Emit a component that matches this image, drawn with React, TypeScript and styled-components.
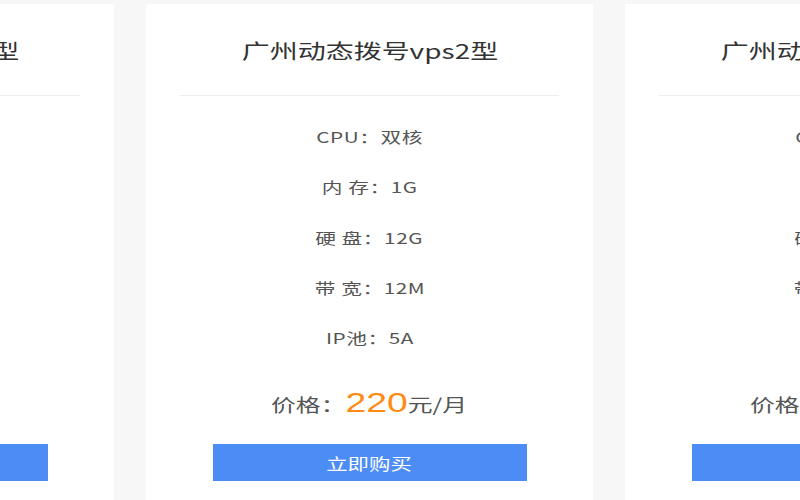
import React from 'react';
import styled, { createGlobalStyle } from 'styled-components';

const GlobalStyle = createGlobalStyle`
  html, body {
    margin: 0;
    padding: 0;
    background: #f7f7f7;
  }
  body {
    font-family: "Noto Sans CJK SC", "Noto Sans", sans-serif;
  }
`;

// 套餐卡片横向排列，左右两张只露出一部分
const Row = styled.div`
  width: 800px;
  height: 500px;
  overflow: hidden;
`;

const Track = styled.div`
  display: flex;
  gap: 32px;
  padding-top: 4px;
  margin-left: -333px;
`;

const Card = styled.div`
  flex: 0 0 447px;
  height: 520px;
  background: #fff;
  display: flex;
  flex-direction: column;
`;

// 文字统一横向拉宽
const Wide = styled.span`
  display: inline-block;
  transform: scaleX(1.38);
  white-space: nowrap;
`;

const Header = styled.div`
  margin: 0 34px;
  padding: 31px 0 30px;
  border-bottom: 1px solid #eeeeee;
  text-align: center;
  font-size: 20.3px;
  line-height: 30px;
  color: #333;
`;

const Specs = styled.ul`
  list-style: none;
  margin: 0;
  padding: 16px 0 0;
  text-align: center;
`;

const Spec = styled.li`
  font-size: 15px;
  line-height: 50.3px;
  letter-spacing: 0.4px;
  color: #555;
`;

const Price = styled.div`
  margin-top: 20px;
  text-align: center;
  font-size: 18px;
  line-height: 40px;
  color: #555;
`;

const Amount = styled.span`
  font-family: "Liberation Sans", Arial, sans-serif;
  font-size: 27px;
  color: #ff8a14;
`;

const BuyButton = styled.button`
  align-self: center;
  margin-top: 20px;
  width: 314px;
  height: 37px;
  padding: 0;
  border: 0;
  background: #4c8cf5;
  color: #fff;
  font-family: inherit;
  font-size: 15.5px;
  cursor: pointer;
`;

type Plan = {
  name: string;
  specs: string[];
  price: number;
};

const plan: Plan = {
  name: '广州动态拨号vps2型',
  specs: ['CPU：双核', '内 存：1G', '硬 盘：12G', '带 宽：12M', 'IP池：5A'],
  price: 220,
};

const PlanCard = ({ name, specs, price }: Plan) => (
  <Card>
    <Header>
      <Wide>{name}</Wide>
    </Header>
    <Specs>
      {specs.map((s) => (
        <Spec key={s}>
          <Wide>{s}</Wide>
        </Spec>
      ))}
    </Specs>
    <Price>
      <Wide>
        价格：<Amount>{price}</Amount>元/月
      </Wide>
    </Price>
    <BuyButton>
      <Wide>立即购买</Wide>
    </BuyButton>
  </Card>
);

export default function App() {
  return (
    <>
      <GlobalStyle />
      <Row>
        <Track>
          <PlanCard {...plan} />
          <PlanCard {...plan} />
          <PlanCard {...plan} />
        </Track>
      </Row>
    </>
  );
}
